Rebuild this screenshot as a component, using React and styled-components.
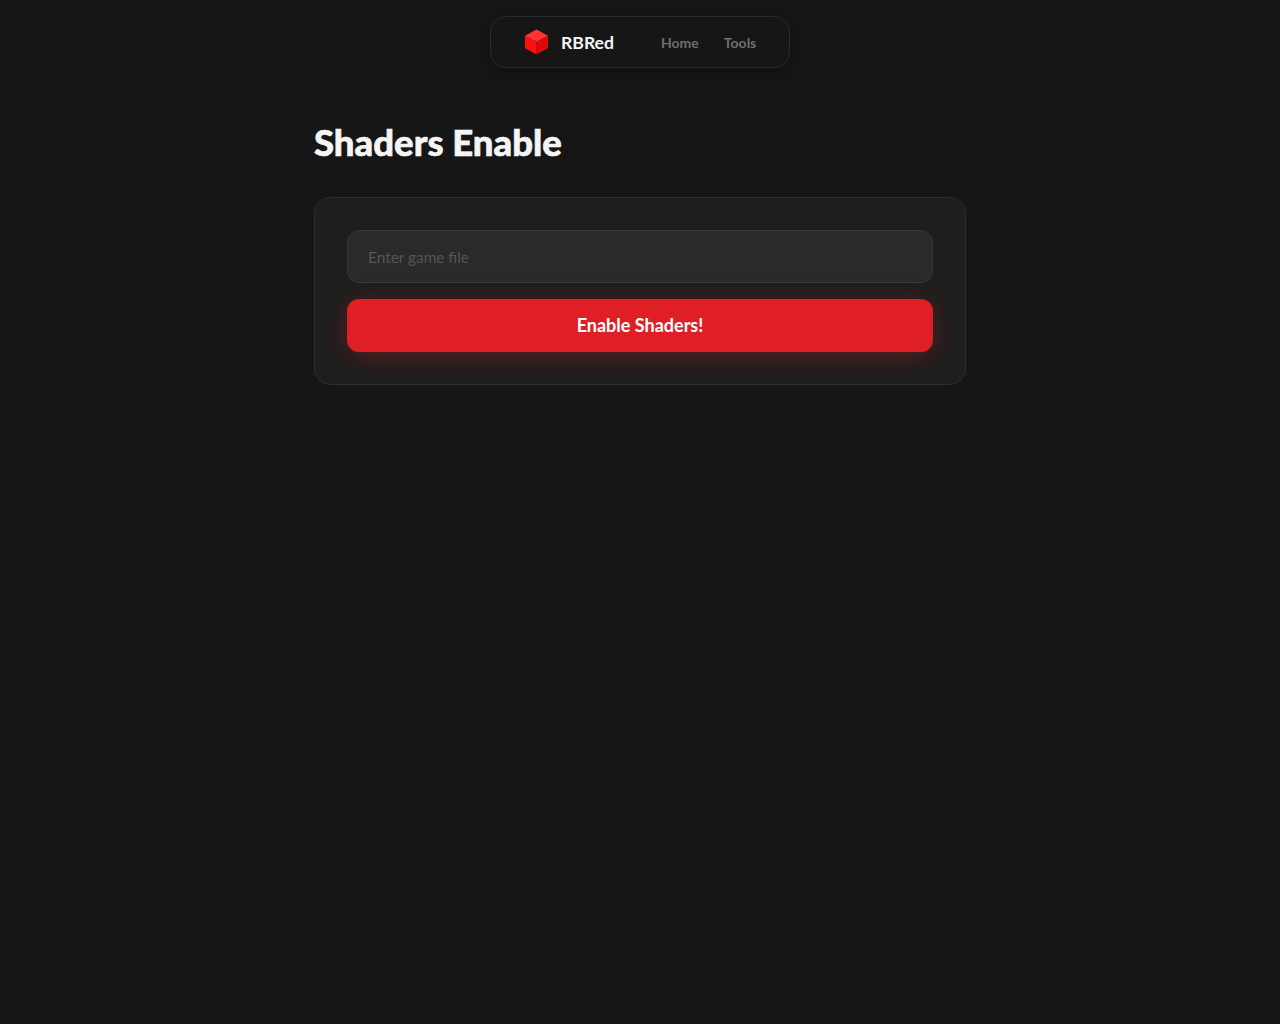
import React from 'react';
import styled, { createGlobalStyle } from "styled-components";

const GlobalStyle = createGlobalStyle`
  html, body {
    margin: 0;
    min-height: 100vh;
    background: #161616;
    font-family: "Lato", "Liberation Sans", sans-serif;
  }
`;

function Logo() {
    return (
        <LogoIcon viewBox="0 0 24 26">
            <polygon points="12,0 24,6.5 12,13 0,6.5" fill="#ff3434" />
            <polygon points="0,6.5 12,13 12,26 0,19.5" fill="#fa1010" />
            <polygon points="24,6.5 12,13 12,26 24,19.5" fill="#e00808" />
        </LogoIcon>
    );
}

function App() {
    return (
        <>
            <GlobalStyle />
            <Page>
                <Nav>
                    <Brand>
                        <Logo />
                        <BrandName>RBRed</BrandName>
                    </Brand>
                    <Links>
                        <NavLink href="#">Home</NavLink>
                        <NavLink href="#">Tools</NavLink>
                    </Links>
                </Nav>
                <Main>
                    <Title>Shaders Enable</Title>
                    <Card>
                        <FileInput placeholder="Enter game file" />
                        <EnableButton>Enable Shaders!</EnableButton>
                    </Card>
                </Main>
            </Page>
        </>
    );
}

const Page = styled.div`
  display: flex;
  flex-direction: column;
  align-items: center;
  padding-top: 16px;
`;

const Nav = styled.nav`
  box-sizing: border-box;
  width: 300px;
  height: 52px;
  display: flex;
  align-items: center;
  padding: 0 33px;
  background: #161616;
  border: 1px solid #2a2a2a;
  border-radius: 16px;
  box-shadow: 0 4px 20px rgba(0, 0, 0, 0.3);
`;

const Brand = styled.div`
  display: flex;
  align-items: center;
  gap: 13px;
  margin-right: 47px;
  margin-left: 1px;
`;

const LogoIcon = styled.svg`
  width: 23px;
  height: 26px;
  flex: none;
`;

const BrandName = styled.span`
  width: 53px;
  font-size: 17.6px;
  font-weight: 700;
  color: #f5f5f5;
  white-space: nowrap;
`;

const Links = styled.div`
  display: flex;
  align-items: center;
  gap: 25px;
`;

const NavLink = styled.a`
  font-size: 14px;
  font-weight: 700;
  color: #6e6e6e;
  text-decoration: none;
`;

const Main = styled.main`
  width: 652px;
  margin-top: 50px;
`;

const Title = styled.h1`
  margin: 0 0 31px;
  height: 48px;
  font-size: 36.5px;
  line-height: 48px;
  font-weight: 900;
  color: #f5f5f5;
  -webkit-text-stroke: 0.6px #f5f5f5;
`;

const Card = styled.div`
  box-sizing: border-box;
  display: flex;
  flex-direction: column;
  gap: 16px;
  padding: 32px;
  background: #1e1e1e;
  border: 1px solid #2e2e2e;
  border-radius: 16px;
`;

const FileInput = styled.input`
  box-sizing: border-box;
  width: 100%;
  height: 53px;
  padding: 0 20px;
  background: #2a2a2a;
  border: 1px solid #383838;
  border-radius: 12px;
  font-family: inherit;
  font-size: 15.4px;
  color: #f5f5f5;
  outline: none;
  &::placeholder {
    color: #555555;
  }
`;

const EnableButton = styled.button`
  width: 100%;
  height: 53px;
  padding: 0 0 2px;
  background: #e01e26;
  border: none;
  border-radius: 12px;
  font-family: inherit;
  font-size: 18px;
  font-weight: 700;
  color: #ffffff;
  cursor: pointer;
  box-shadow: 0 4px 24px rgba(224, 30, 38, 0.3);
`;

export default App;
